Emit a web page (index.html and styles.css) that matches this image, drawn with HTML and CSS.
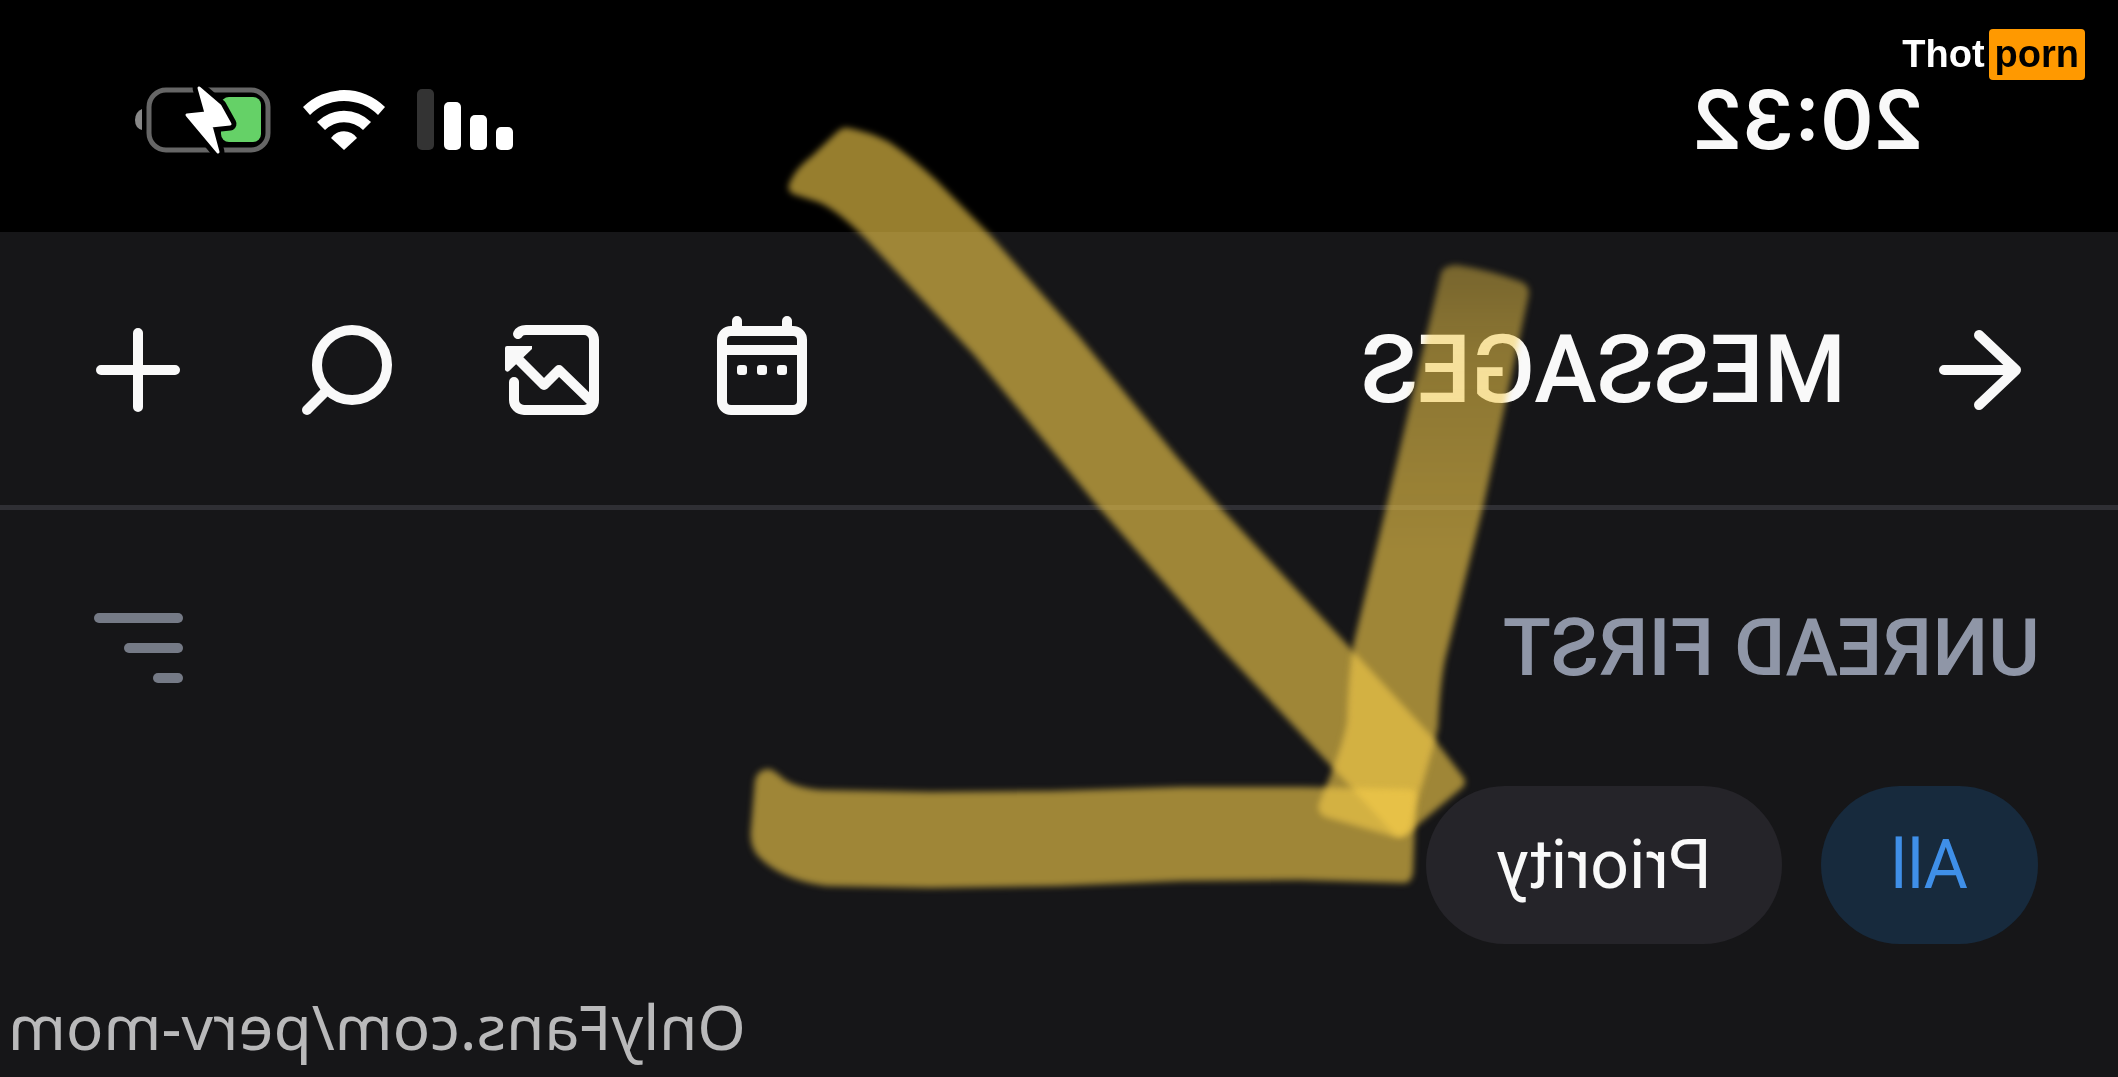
FILE: index.html
```
<!DOCTYPE html>
<html lang="en">
<head>
    <meta charset="UTF-8">
    <meta name="viewport" content="width=device-width, initial-scale=1.0">
    <title>Messages</title>
    <link rel="stylesheet" href="styles.css">
</head>
<body>
    <!-- The whole screen is mirrored in styles.css -->
    <div class="screen">
        <div class="status-bar">
            <span class="time">20:32</span>
            <div class="status-icons">
                <svg width="96" height="62" viewBox="0 0 96 62" fill="#fff">
                    <rect x="0" y="38" width="17" height="23" rx="5"/>
                    <rect x="26" y="26" width="17" height="35" rx="5"/>
                    <rect x="52" y="13" width="17" height="48" rx="5"/>
                    <rect x="79" y="0" width="17" height="61" rx="5" fill="#333"/>
                </svg>
                <svg width="84" height="62" viewBox="0 0 84 62" fill="#fff">
                    <path d="M1 18A58 58 0 0 1 83 18L76 26A48 48 0 0 0 8 26Z"/>
                    <path d="M15 33A38 38 0 0 1 69 33L61 41A27 27 0 0 0 23 41Z"/>
                    <path d="M29 49A16 16 0 0 1 55 49L42 61Z"/>
                </svg>
                <svg width="136" height="68" viewBox="0 0 136 68">
                    <rect x="3" y="4" width="119" height="60" rx="17" fill="none" stroke="#666" stroke-width="5"/>
                    <path d="M129 23Q136 26 136 34T129 44Z" fill="#888"/>
                    <rect x="10" y="11" width="40" height="45" rx="8" fill="#65d167"/>
                    <path d="M72 2L51 20L41 38L60 40L53 66L84 29L65 27Z" fill="#000" stroke="#000" stroke-width="13" stroke-linejoin="round"/>
                    <path d="M72 2L51 20L41 38L60 40L53 66L84 29L65 27Z" fill="#fff" stroke="#fff" stroke-width="3" stroke-linejoin="round"/>
                </svg>
            </div>
        </div>

        <header class="header">
            <button class="icon-btn" aria-label="Back">
                <svg viewBox="0 0 120 120">
                    <path d="M61 25L24 60L61 95M26 60H96"/>
                </svg>
            </button>
            <h1>MESSAGES</h1>
            <div class="actions">
                <button class="icon-btn" aria-label="Calendar">
                    <svg viewBox="0 0 120 120">
                        <rect x="20" y="21" width="80" height="79" rx="9"/>
                        <path d="M20 40H100M35 11V21M85 11V21"/>
                        <g class="solid">
                            <rect x="35" y="55" width="10" height="10" rx="3"/>
                            <rect x="55" y="55" width="10" height="10" rx="3"/>
                            <rect x="75" y="55" width="10" height="10" rx="3"/>
                        </g>
                    </svg>
                </button>
                <button class="icon-btn" aria-label="Media">
                    <svg viewBox="0 0 120 120">
                        <path d="M96 24Q94 20 88 20H30A10 10 0 0 0 20 30V90A10 10 0 0 0 30 100H90A10 10 0 0 0 100 90V72"/>
                        <path d="M22 92L55 60L70 75L97 48"/>
                        <path class="solid" d="M82 36H107Q109 36 109 38V60Q107 63 105 61L82 39Z"/>
                    </svg>
                </button>
                <button class="icon-btn" aria-label="Search">
                    <svg viewBox="0 0 120 120">
                        <circle cx="54" cy="55" r="35"/>
                        <path d="M79 80L99 100"/>
                    </svg>
                </button>
                <button class="icon-btn" aria-label="New message">
                    <svg viewBox="0 0 120 120">
                        <path d="M60 23V97M23 60H97"/>
                    </svg>
                </button>
            </div>
        </header>

        <main>
            <div class="sort-row">
                <h2>UNREAD FIRST</h2>
                <button class="sort-btn" aria-label="Sort">
                    <span class="bar"></span>
                    <span class="bar medium"></span>
                    <span class="bar short"></span>
                </button>
            </div>
            <div class="filters">
                <button class="chip active">All</button>
                <button class="chip">Priority</button>
            </div>
            <p class="profile">OnlyFans.com/perv-mom</p>
        </main>
    </div>

    <!-- Hand drawn arrow over the screen -->
    <svg class="marker" viewBox="0 0 2118 1077">
        <defs>
            <linearGradient id="fade" x1="0" y1="0" x2="0" y2="1">
                <stop offset="0" stop-color="#f4cb4b" stop-opacity="0.44"/>
                <stop offset="0.15" stop-color="#f4cb4b" stop-opacity="0.53"/>
                <stop offset="0.5" stop-color="#f4cb4b" stop-opacity="0.62"/>
            </linearGradient>
        </defs>
        <path d="M848 128Q870 132 889 142Q910 156 936 180L991 236L1078 335L1177 457L1221 508L1353 651L1435 740L1464 778Q1467 784 1462 788L1408 833Q1400 840 1392 832L1331 766L1221 648L1095 503L974 355L865 238Q836 209 818 202L793 194Q786 190 790 182Q796 168 812 156L836 133Q842 127 848 128Z"/>
        <path class="faded" d="M1441 273Q1444 265 1457 265Q1490 270 1522 282Q1529 285 1529 294L1484 503L1445 660Q1440 685 1438 728Q1428 768 1416 804L1410 830Q1405 839 1395 837L1325 817Q1316 812 1319 803Q1342 750 1347 722Q1348 680 1353 646L1386 508Z"/>
        <path d="M755 780Q758 769 769 769Q774 770 785 780Q798 788 821 790L930 792L1051 791L1183 787L1300 787L1410 789Q1417 790 1416 798L1413 873Q1411 884 1403 883L1300 880L1183 881L1057 886L930 888L826 886Q780 880 757 855Q749 844 751 828Z"/>
    </svg>

    <div class="watermark">Thot<span>porn</span></div>
</body>
</html>
```
FILE: styles.css
```
* {
    box-sizing: border-box;
}
body {
    margin: 0;
    position: relative;
    min-height: 100vh;
    overflow: hidden;
    background-color: #161618;
    color: #f9f9f9;
    font-family: Roboto, Arial, sans-serif;
}
h1, h2, p {
    margin: 0;
}
button {
    border: none;
    padding: 0;
    background: none;
    color: inherit;
    font-family: inherit;
    cursor: pointer;
}
.screen {
    transform: scaleX(-1);
}

/* Status bar */
.status-bar {
    display: flex;
    justify-content: space-between;
    align-items: center;
    height: 232px;
    padding: 8px 135px 0 194px;
    background-color: #000;
}
.time {
    font-family: Inter, sans-serif;
    font-size: 81px;
    font-weight: 600;
    line-height: 96px;
}
.status-icons {
    display: flex;
    align-items: center;
    gap: 31px;
}
.status-icons svg {
    display: block;
    overflow: visible;
}

/* Header */
.header {
    display: flex;
    align-items: center;
    height: 278px;
    padding: 3px 78px 0;
    border-bottom: 5px solid #2f2f34;
}
.header h1 {
    margin-left: 74px;
    font-size: 94px;
    font-weight: 500;
    line-height: 112px;
}
.icon-btn svg {
    display: block;
    width: 120px;
    height: 120px;
    fill: none;
    stroke: #f9f9f9;
    stroke-width: 10;
    stroke-linecap: round;
    stroke-linejoin: round;
}
.icon-btn .solid {
    fill: #f9f9f9;
    stroke: none;
}
.actions {
    display: flex;
    gap: 88px;
    margin-left: auto;
}

/* Messages list controls */
.sort-row {
    display: flex;
    justify-content: space-between;
    align-items: center;
    padding: 90px 94px 0 78px;
}
.sort-row h2 {
    color: #8f96a7;
    font-size: 79px;
    font-weight: 500;
    line-height: 96px;
}
.sort-btn {
    display: flex;
    flex-direction: column;
    gap: 20px;
}
.bar {
    width: 89px;
    height: 10px;
    border-radius: 5px;
    background-color: #757a86;
}
.bar.medium {
    width: 59px;
}
.bar.short {
    width: 30px;
}
.filters {
    display: flex;
    gap: 39px;
    padding: 90px 80px 0;
}
.chip {
    height: 158px;
    padding: 0 70px;
    border-radius: 79px;
    background-color: #252429;
    font-size: 68px;
}
.chip.active {
    background-color: #172a3d;
    color: #3f8fe8;
}
.profile {
    padding: 42px 8px 0;
    color: #b9b9ba;
    font-family: "Noto Sans", sans-serif;
    font-size: 62px;
    line-height: 80px;
    text-align: right;
}

/* Overlays */
.marker {
    display: block;
    position: absolute;
    top: 0;
    left: 0;
    width: 100%;
    pointer-events: none;
}
.marker path {
    fill: #f4cb4b;
    fill-opacity: 0.62;
    filter: blur(3px);
}
.marker .faded {
    fill: url(#fade);
    fill-opacity: 1;
}
.watermark {
    position: absolute;
    top: 29px;
    right: 33px;
    display: flex;
    align-items: center;
    gap: 4px;
    color: #fff;
    font-family: "Liberation Sans", Arial, sans-serif;
    font-size: 38px;
    font-weight: bold;
    line-height: 51px;
}
.watermark span {
    padding: 0 6px;
    border-radius: 4px;
    background-color: #ff9900;
    color: #000;
}
```
